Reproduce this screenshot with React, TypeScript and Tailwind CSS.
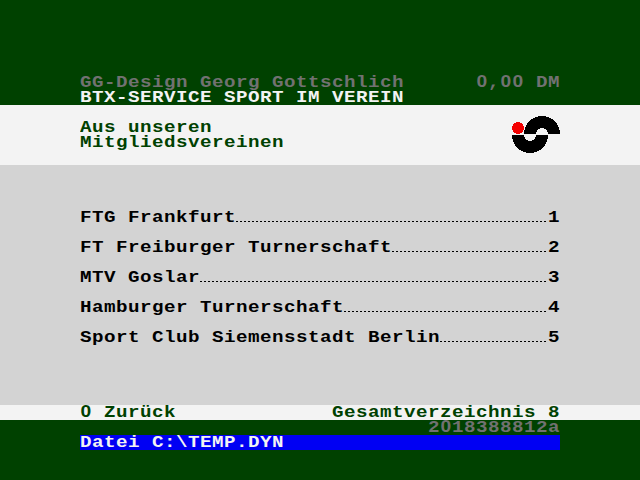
import { Fragment, type ReactNode } from "react";

const zeroless = (text: string) =>
  text.split(/(0)/).map((part, i) =>
    part === "0" ? (
      <span key={i} className="inline-block w-[10px] text-center align-baseline leading-[0] font-['Liberation_Sans',sans-serif]">0</span>
    ) : (
      <Fragment key={i}>{part}</Fragment>
    ),
  );

function Wide({ children, right = false }: { children: string; right?: boolean }) {
  const width = children.length * 12;
  return (
    <span className={`block h-[15px] shrink-0 pt-px ${right ? "ml-auto" : ""}`} style={{ width }}>
      <span className="block h-[14px] w-max origin-left scale-x-[1.2] whitespace-pre tracking-[0.398px]">{zeroless(children)}</span>
    </span>
  );
}

function Row({ className = "", children }: { className?: string; children: ReactNode }) {
  return <div className={`mx-20 flex h-[15px] ${className}`}>{children}</div>;
}

const clubs = [
  "FTG Frankfurt",
  "FT Freiburger Turnerschaft",
  "MTV Goslar",
  "Hamburger Turnerschaft",
  "Sport Club Siemensstadt Berlin",
];

function Logo() {
  return (
    <svg className="ml-auto h-[38px] w-12" viewBox="0 0 48 38" shapeRendering="crispEdges">
      <circle cx="6" cy="12" r="6" fill="#f30000" />
      <path d="M12 18A18 18 0 0 1 48 18H36A6 6 0 0 0 24 18Z" fill="#000" />
      <path d="M0 19H12A6 6 0 0 0 24 19H36A18 18 0 0 1 0 19Z" fill="#000" />
    </svg>
  );
}

export default function App() {
  return (
    <main className="flex h-[480px] w-[640px] flex-col overflow-hidden bg-[#004100] font-['Liberation_Mono',monospace] text-[16px] leading-[15px] font-bold">
      <header className="h-[105px] pt-[75px]">
        <Row className="text-[#717171]">
          <Wide>GG-Design Georg Gottschlich</Wide>
          <Wide right>0,00 DM</Wide>
        </Row>
        <Row className="text-[#f3f3f3]"><Wide>BTX-SERVICE SPORT IM VEREIN</Wide></Row>
      </header>
      <section className="flex h-[60px] bg-[#f3f3f3] px-20 text-[#004100]">
        <h1 className="pt-[15px]">
          <Wide>Aus unseren</Wide>
          <Wide>Mitgliedsvereinen</Wide>
        </h1>
        <div className="ml-auto pt-[11px]"><Logo /></div>
      </section>
      <section className="flex h-[240px] flex-col gap-[15px] bg-[#d3d3d3] pt-[45px] text-black">
        {clubs.map((club, i) => (
          <Row key={club}>
            <Wide>{club}</Wide>
            <span className="mt-[11px] h-px flex-1 bg-[repeating-linear-gradient(90deg,#000_0_2px,transparent_2px_4px)]" />
            <Wide>{String(i + 1)}</Wide>
          </Row>
        ))}
      </section>
      <nav className="h-[15px] bg-[#f3f3f3] text-[#004100]">
        <Row><Wide>0 Zurück</Wide><Wide right>Gesamtverzeichnis 8</Wide></Row>
      </nav>
      <footer>
        <Row className="text-[#717171]"><Wide right>2018388812a</Wide></Row>
        <Row className="bg-[#0000f3] text-[#f3f3f3]"><Wide>{"Datei C:\\TEMP.DYN"}</Wide></Row>
      </footer>
    </main>
  );
}
